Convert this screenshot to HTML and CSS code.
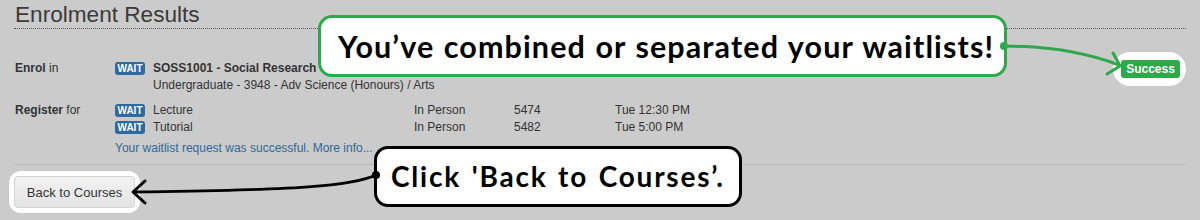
FILE: index.html
```html
<!DOCTYPE html>
<html>
<head>
<meta charset="utf-8">
<link rel="stylesheet" href="styles.css">
</head>
<body>
<div class="page">
  <h1 class="title">Enrolment Results</h1>

  <div class="row enrol">
    <div class="label"><b>Enrol</b> in</div>
    <div class="content">
      <div class="line"><span class="badge">WAIT</span><b>SOSS1001 - Social Research</b></div>
      <div class="line sub">Undergraduate - 3948 - Adv Science (Honours) / Arts</div>
    </div>
    <div class="status"><span class="halo-pill"><span class="success">Success</span></span></div>
  </div>

  <div class="row register">
    <div class="label"><b>Register</b> for</div>
    <div class="content">
      <div class="classes">
        <div class="cls"><span class="badge">WAIT</span>Lecture</div>
        <div>In Person</div>
        <div>5474</div>
        <div>Tue 12:30 PM</div>
        <div class="cls"><span class="badge">WAIT</span>Tutorial</div>
        <div>In Person</div>
        <div>5482</div>
        <div>Tue 5:00 PM</div>
      </div>
      <a class="info">Your waitlist request was successful. More info...</a>
    </div>
  </div>

  <div class="rule"></div>

  <div class="actions">
    <span class="halo-btn"><button class="btn">Back to Courses</button></span>
  </div>

  <div class="callout callout-green">You’ve combined or separated your waitlists!</div>
  <div class="callout callout-black">Click 'Back to Courses’.</div>

  <svg class="arrows" width="1200" height="220" viewBox="0 0 1200 220">
    <path d="M1004,46 C1045,46 1082,51 1119,65" fill="none" stroke="#2ea84a" stroke-width="3" stroke-linecap="round"/>
    <path d="M1113,53 L1120,66 L1107,74" fill="none" stroke="#2ea84a" stroke-width="3" stroke-linecap="round" stroke-linejoin="round"/>
    <circle cx="1004" cy="46" r="4" fill="#2ea84a"/>
    <path d="M376,175 C352,186 300,190 134,192" fill="none" stroke="#000" stroke-width="3" stroke-linecap="round"/>
    <path d="M145,181 L133,192 L145,203" fill="none" stroke="#000" stroke-width="3" stroke-linecap="round" stroke-linejoin="round"/>
    <circle cx="376" cy="175" r="4" fill="#000"/>
  </svg>
</div>
</body>
</html>
```

FILE: styles.css
```css
html, body {
  margin: 0;
  padding: 0;
  background: #cbcbcb;
}

.page {
  position: relative;
  width: 1200px;
  height: 220px;
  padding: 0 14px 0 14px;
  box-sizing: border-box;
  font-family: "Liberation Sans", Arial, sans-serif;
  font-size: 12px;
  color: #333;
  overflow: hidden;
}

.title {
  margin: 0;
  padding: 2px 0 0 1px;
  font-size: 22.6px;
  line-height: 26px;
  font-weight: normal;
  color: #3a3a3a;
  border-bottom: 1px dotted #555;
}

.row {
  display: flex;
  align-items: flex-start;
  padding-left: 1px;
  line-height: 17px;
}

.enrol {
  margin-top: 31px;
}

.register {
  margin-top: 8px;
}

.label {
  width: 100px;
  flex: none;
}

.content {
  flex: 1;
}

.badge {
  display: inline-block;
  width: 30px;
  height: 13px;
  line-height: 13px;
  margin-right: 8px;
  border-radius: 3px;
  background: #2d6a9f;
  color: #fff;
  font-size: 10px;
  font-weight: bold;
  text-align: center;
  vertical-align: 0;
}

.sub {
  padding-left: 38px;
}

.status {
  flex: none;
  margin-top: -8px;
}

.halo-pill {
  display: inline-block;
  padding: 8px 6px 8px 8px;
  background: #fff;
  border-radius: 17px;
}

.success {
  display: block;
  width: 59px;
  height: 18px;
  line-height: 18px;
  border-radius: 3px;
  background: #2ea84a;
  color: #fff;
  font-size: 12px;
  font-weight: bold;
  text-align: center;
}

.classes {
  display: grid;
  grid-template-columns: 299px 100px 101px 1fr;
}

.info {
  display: block;
  margin-top: 4px;
  color: #2f6898;
}

.rule {
  margin-top: 7px;
  height: 1px;
  background: #b9b9b9;
}

.actions {
  margin-top: 6px;
  margin-left: -5px;
}

.halo-btn {
  display: inline-block;
  padding: 5px;
  background: #fff;
  border-radius: 12px;
}

.btn {
  display: block;
  width: 121px;
  height: 32px;
  padding: 0;
  border: 1px solid #d2d2d2;
  border-radius: 4px;
  background: linear-gradient(#f2f2f2, #e4e4e4);
  font-family: "Liberation Sans", Arial, sans-serif;
  font-size: 13px;
  color: #333;
}

.callout {
  position: absolute;
  box-sizing: border-box;
  background: #fff;
  border-radius: 14px;
  font-family: Lato, "Noto Sans", sans-serif;
  font-weight: 700;
  color: #000;
  white-space: nowrap;
}

.callout-green {
  left: 318px;
  top: 15px;
  width: 689px;
  height: 62px;
  border: 3px solid #2ea84a;
  font-size: 30.5px;
  line-height: 56px;
  padding-left: 17px;
  letter-spacing: 1.1px;
  word-spacing: 1px;
}

.callout-black {
  left: 374px;
  top: 146px;
  width: 368px;
  height: 61px;
  border: 3px solid #000;
  font-size: 28px;
  line-height: 55px;
  padding-left: 14px;
  letter-spacing: 1.8px;
  word-spacing: 2px;
}

.arrows {
  position: absolute;
  left: 0;
  top: 0;
  pointer-events: none;
}
```
